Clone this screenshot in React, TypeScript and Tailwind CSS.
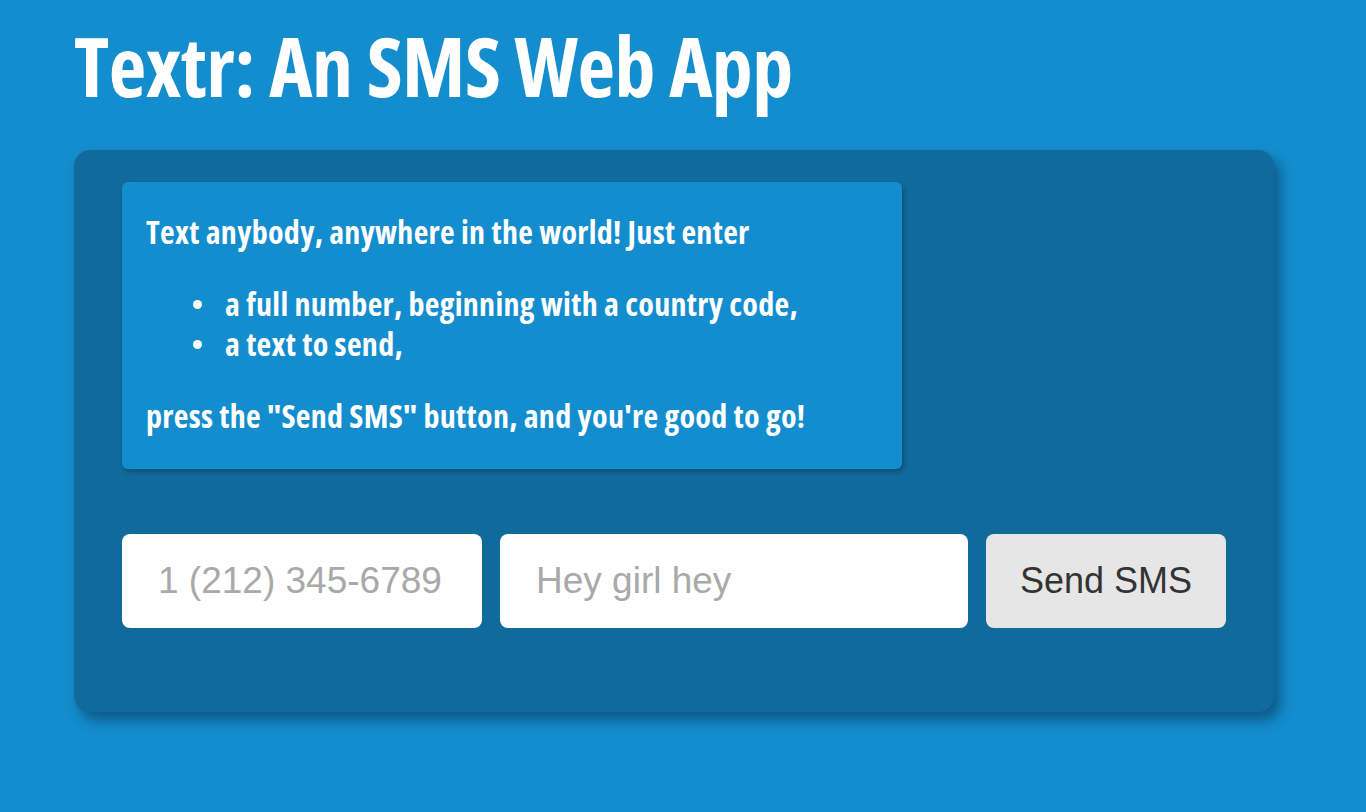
export default function App() {
  const acme = { fontFamily: '"Open Sans", "Liberation Sans", sans-serif' };
  const Bullet = () => <span className="mr-[23px] inline-block h-[9px] w-[9px] min-w-[9px] shrink-0 rounded-full bg-white" />;
  return (
    <div className="min-h-[812px] w-full bg-[#148dce] pl-[74px] pt-[17px]">
      <h1
        className="m-0 font-stretch-condensed text-[82px] font-bold leading-[96px] tracking-[-0.5px] text-white"
        style={acme}
      >
        Textr: An SMS Web App
      </h1>
      <div className="mt-[37px] flex h-[562px] w-[1200px] flex-col rounded-[16px] bg-[#106b9c] px-[48px] pt-[32px] shadow-[6px_8px_14px_rgba(0,0,0,0.38)]">
        <div
          className="w-[780px] rounded-[6px] bg-[#148dce] px-[24px] pt-[30px] pb-[33px] font-stretch-condensed text-[32px] font-bold leading-[40px] tracking-[0.3px] text-white shadow-[2px_3px_5px_rgba(0,0,0,0.25)]"
          style={acme}
        >
          <p>Text anybody, anywhere in the world! Just enter</p>
          <ul className="my-[32px] list-none pl-[47px]">
            <li className="flex items-center">
              <Bullet />
              <span>a full number, beginning with a country code,</span>
            </li>
            <li className="flex items-center">
              <Bullet />
              <span>a text to send,</span>
            </li>
          </ul>
          <p>press the "Send SMS" button, and you're good to go!</p>
        </div>
        <div
          className="mt-[65px] flex gap-[18px]"
          style={{ fontFamily: '"Liberation Sans", Arial, sans-serif' }}
        >
          <input
            className="h-[94px] w-[360px] rounded-[8px] bg-white px-[36px] text-[37px] text-[#333] outline-none placeholder:text-[#a9a9a9]"
            placeholder="1 (212) 345-6789"
          />
          <input
            className="h-[94px] w-[468px] rounded-[8px] bg-white px-[36px] text-[37px] text-[#333] outline-none placeholder:text-[#a9a9a9]"
            placeholder="Hey girl hey"
          />
          <button className="h-[94px] w-[240px] rounded-[8px] bg-[#e6e6e6] text-[36px] text-[#333]">
            Send SMS
          </button>
        </div>
      </div>
    </div>
  );
}
